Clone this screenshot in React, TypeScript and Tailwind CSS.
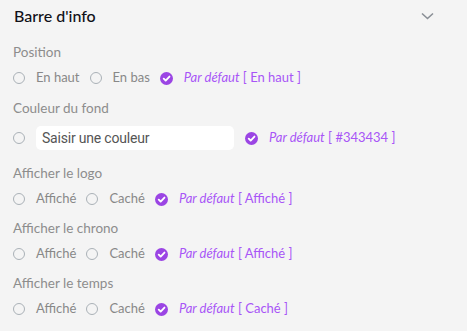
import React from 'react';

const font = { fontFamily: 'Lato, "Noto Sans", sans-serif' };

function Radio() {
  return <span className="inline-block w-[12px] h-[12px] rounded-full border-[1.5px] border-[#aab1b7] bg-transparent shrink-0" />;
}

function Check() {
  return (
    <svg width="13" height="13" viewBox="0 0 14 14" className="shrink-0">
      <circle cx="7" cy="7" r="7" fill="#9b45e4" />
      <path d="M4 7.2 L6.1 9.2 L10.2 4.9" stroke="#fff" strokeWidth="2" fill="none" strokeLinecap="round" strokeLinejoin="round" />
    </svg>
  );
}

function Option({ label }: { label: string }) {
  return (
    <div className="flex items-center gap-[11px]">
      <Radio />
      <span className="text-[13px] text-[#888888]">{label}</span>
    </div>
  );
}

function Default({ value }: { value: string }) {
  return (
    <div className="flex items-center gap-[11px]">
      <Check />
      <span className="text-[13px] text-[#a855f7]">
        <span className="italic">Par défaut</span> [ {value} ]
      </span>
    </div>
  );
}

function Label({ children, className }: { children: React.ReactNode; className: string }) {
  return <div className={'text-[13.5px] leading-[18px] text-[#8d8d8d] ' + className}>{children}</div>;
}

export default function App() {
  return (
    <div className="w-[467px] h-[331px] bg-[#f4f4f4] px-[13px] pt-[3px] overflow-hidden" style={font}>
      <div className="flex items-center justify-between h-[26px] pl-[1px] pr-[20px]">
        <h2 className="text-[16px] font-medium text-[#111118]">Barre d'info</h2>
        <svg width="13" height="8" viewBox="0 0 13 8">
          <path d="M1 1.5 L6.5 6.5 L12 1.5" stroke="#8a8f96" strokeWidth="1.6" fill="none" />
        </svg>
      </div>

      <Label className="mt-[14px]">Position</Label>
      <div className="flex items-center gap-[10px] h-[20px] mt-[7px]">
        <Option label="En haut" />
        <Option label="En bas" />
        <Default value="En haut" />
      </div>

      <Label className="mt-[11px]">Couleur du fond</Label>
      <div className="flex items-center gap-[11px] h-[24px] mt-[9px]">
        <Radio />
        <div className="w-[198px] h-[24px] bg-white rounded-[5px] flex items-center px-[6px] text-[14px] tracking-[-0.2px] text-[#555]" style={{ fontFamily: 'Roboto, "Liberation Sans", sans-serif' }}>
          Saisir une couleur
        </div>
        <Default value="#343434" />
      </div>

      <Label className="mt-[14px]">Afficher le logo</Label>
      <div className="flex items-center gap-[10px] h-[20px] mt-[7px]">
        <Option label="Affiché" />
        <Option label="Caché" />
        <Default value="Affiché" />
      </div>

      <Label className="mt-[10px]">Afficher le chrono</Label>
      <div className="flex items-center gap-[10px] h-[20px] mt-[7px]">
        <Option label="Affiché" />
        <Option label="Caché" />
        <Default value="Affiché" />
      </div>

      <Label className="mt-[10px]">Afficher le temps</Label>
      <div className="flex items-center gap-[10px] h-[20px] mt-[7px]">
        <Option label="Affiché" />
        <Option label="Caché" />
        <Default value="Caché" />
      </div>
    </div>
  );
}
